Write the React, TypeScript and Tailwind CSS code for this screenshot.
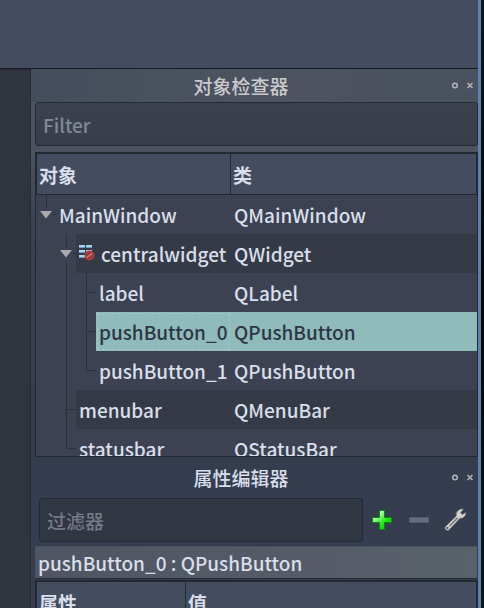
import React from "react";

type NodeRow = {
  name: string;
  cls: string;
  indent: string;
  guide: string;
  arrow?: string;
  tone: string;
  icon?: boolean;
  selected?: boolean;
};

const rows: NodeRow[] = [
  { name: "MainWindow", cls: "QMainWindow", indent: "w-5", guide: "M10.5 0V13M17 19.5H21", arrow: "M4 16H16L10 23.5Z", tone: "bg-[#3c4252] text-[#d8deea]" },
  { name: "centralwidget", cls: "QWidget", indent: "w-10", guide: "M30.5 0V13M37 19.5H41M30.5 27V39", arrow: "M24 16H36L30 23.5Z", tone: "bg-[#353b46] text-[#d8deea]", icon: true },
  { name: "label", cls: "QLabel", indent: "w-15", guide: "M30.5 0V39M50.5 0V39M50.5 19.5H61", tone: "bg-[#3c4252] text-[#d8deea]" },
  { name: "pushButton_0", cls: "QPushButton", indent: "w-15", guide: "M30.5 0V39M50.5 0V39M50.5 19.5H61", tone: "bg-[#8fbcbb] text-[#2e3645]", selected: true },
  { name: "pushButton_1", cls: "QPushButton", indent: "w-15", guide: "M30.5 0V39M50.5 0V19.5H61", tone: "bg-[#3c4252] text-[#d8deea]" },
  { name: "menubar", cls: "QMenuBar", indent: "w-10", guide: "M30.5 0V39M30.5 19.5H41", tone: "bg-[#353b46] text-[#d8deea]" },
  { name: "statusbar", cls: "QStatusBar", indent: "w-10", guide: "M30.5 0V19.5H41", tone: "bg-[#3c4252] text-[#d8deea]" },
];

function WidgetIcon() {
  return (
    <svg className="mt-[11px] ml-[3px] h-4 w-4 shrink-0" viewBox="0 0 16 16">
      <path d="M0 1H6M7 1H13M0 6H6M7 6H13M0 11H6" stroke="#a6d6ed" strokeWidth="2" />
      <path d="M0 2.5H6M7 2.5H13M0 7.5H6M0 12.5H6" stroke="#6d9bbd" strokeWidth="1" />
      <circle cx="10.5" cy="10.5" r="4.2" fill="#814248" stroke="#bd3435" strokeWidth="1.7" />
      <path d="M7.8 12.6L13.2 8.4" stroke="#e07f76" strokeWidth="1.3" />
    </svg>
  );
}

function DockTitle({ title, className, iconOffset }: { title: string; className: string; iconOffset: string }) {
  return (
    <div className={`flex shrink-0 ${className}`}>
      <div className="w-[419px] pl-px text-center">{title}</div>
      <svg className={`${iconOffset} h-[9px] w-[27px]`} viewBox="0 0 27 9" fill="none" stroke="#b4b6ba">
        <circle cx="5" cy="4.5" r="2.3" strokeWidth="1.5" />
        <path d="M17.5 2L22.5 7M22.5 2L17.5 7" strokeWidth="1.5" />
      </svg>
    </div>
  );
}

function TreeRow({ row }: { row: NodeRow }) {
  return (
    <div className="flex h-[39px] shrink-0">
      <div className={`${row.indent} shrink-0`}>
        <svg className="h-[39px] w-full" fill="none">
          <path d={row.guide} stroke="#2b303b" />
          {row.arrow && <path d={row.arrow} fill="#aaaaaa" />}
        </svg>
      </div>
      <div className={`flex min-w-0 flex-1 leading-[39px] ${row.tone}`}>
        <div className={`flex flex-1 ${row.selected ? "my-px mr-px ml-px border border-dashed border-[#a5c8c7] leading-[35px]" : ""}`}>
          {row.icon && <WidgetIcon />}
          <span className={row.icon ? "pl-[6px]" : row.selected ? "pl-px" : "pl-[3px]"}>{row.name}</span>
        </div>
        <div className="w-[246px] shrink-0 pl-[3px]">{row.cls}</div>
      </div>
    </div>
  );
}

export default function App() {
  return (
    <div className="flex h-[608px] w-[484px] overflow-hidden bg-[#080b0e] font-['Noto_Sans_CJK_SC',sans-serif] text-[19px] font-medium whitespace-nowrap text-[#d8deea]">
      <main className="flex w-[478px] shrink-0 flex-col">
        <div className="h-[69px] shrink-0 border-b border-[#171923] bg-[#444c5f]" />
        <div className="flex min-h-0 flex-1">
          <aside className="w-[31px] shrink-0 border-t border-r border-[#262b36] bg-[#2f343f]" />
          <section className="flex w-[447px] shrink-0 flex-col bg-[linear-gradient(180deg,#4c535f_0px,#4c535f_83px,#3b4352_150px,#343d4e_330px,#353d50_100%)]">
            <DockTitle title="对象检查器" iconOffset="mt-[12px]" className="h-[33px] bg-linear-to-r from-[#454d5d] via-[#4d545f] to-[#4a515f] leading-[34px] text-[#c9cacd]" />
            <div className="ml-1 h-11 w-[443px] shrink-0 rounded-[3px] border border-[#242a34] bg-linear-to-b from-[#3b414d] to-[#383f4b] pl-[7px] leading-[43px] text-[#818896]">Filter</div>
            <div className="mt-[6px] ml-1 flex h-[305px] w-[443px] shrink-0 flex-col overflow-hidden border border-[#232831] bg-[#3c4252]">
              <div className="flex h-[42px] shrink-0 border border-[#232831] bg-[#444c5f] leading-[41px] font-bold">
                <div className="w-[194px] border-r border-[#232831] pl-[2px]">对象</div>
                <div className="pl-[2px]">类</div>
              </div>
              {rows.map((row) => <TreeRow key={row.name} row={row} />)}
            </div>
            <DockTitle title="属性编辑器" iconOffset="mt-[16px]" className="h-[41px] leading-[42px]" />
            <div className="flex h-11 shrink-0 pl-2">
              <div className="h-11 w-[324px] rounded-[3px] border border-[#242a34] bg-[#303642] pl-[7px] leading-[43px] text-[#737a88]">过滤器</div>
              <svg className="mt-[12px] ml-[9px] h-5 w-5" viewBox="0 0 20 20">
                <defs>
                  <linearGradient id="plus-fill" x1="0" y1="0" x2="1" y2="1">
                    <stop offset="0.2" stopColor="#c9ffc2" />
                    <stop offset="0.6" stopColor="#24e519" />
                    <stop offset="1" stopColor="#00b800" />
                  </linearGradient>
                </defs>
                <path d="M7.5.5H12.5V7.5H19.5V12.5H12.5V19.5H7.5V12.5H.5V7.5H7.5Z" fill="url(#plus-fill)" stroke="#078b0b" />
              </svg>
              <svg className="mt-[19px] ml-[17px] h-[6px] w-5" viewBox="0 0 20 6">
                <path d="M.5.5H19.5V5.5H.5Z" fill="#636c80" stroke="#525b6e" />
              </svg>
              <svg className="mt-[10px] ml-[15px] h-6 w-[23px]" viewBox="0 0 23 24" strokeLinejoin="round">
                <path d="M1.5 18.5L12.2 8C11.6 4.4 14.2 1.2 18 .8L19.5 1.6L16.7 4.5L18.2 6.5L21.9 4.2C22.5 7.6 19.3 10.8 15.8 10.5L5.3 21.8C3.6 23.6 -.5 21.2 1.5 18.5Z" fill="#d3d2ce" stroke="#5d6066" strokeWidth=".8" />
                <path d="M5.4 18.2L13.6 9.7" stroke="#72736e" strokeWidth="1.4" />
                <circle cx="3.5" cy="20" r="1.1" fill="#343b49" />
              </svg>
            </div>
            <div className="mt-1 ml-1 h-8 w-[442px] shrink-0 border-t border-l border-[#4b525d] bg-linear-to-r from-[#4f5562] to-[#59616b] pl-[2px] leading-[31px]">pushButton_0 : QPushButton</div>
            <div className="ml-1 h-px w-[442px] shrink-0 bg-[#252b35]" />
            <div className="mt-px ml-1 flex h-[50px] w-[443px] shrink-0 overflow-hidden border-2 border-[#232831] bg-[#444c5f] leading-[41px] font-bold">
              <div className="w-[149px] border-r border-[#232831] pl-[2px]">属性</div>
              <div className="pl-[2px]">值</div>
            </div>
          </section>
        </div>
      </main>
      <div className="w-[3px] bg-[#5e81ac]" />
      <div className="w-[3px] bg-linear-to-b from-[#11171d] via-[#030506] to-[#111719]" />
    </div>
  );
}
